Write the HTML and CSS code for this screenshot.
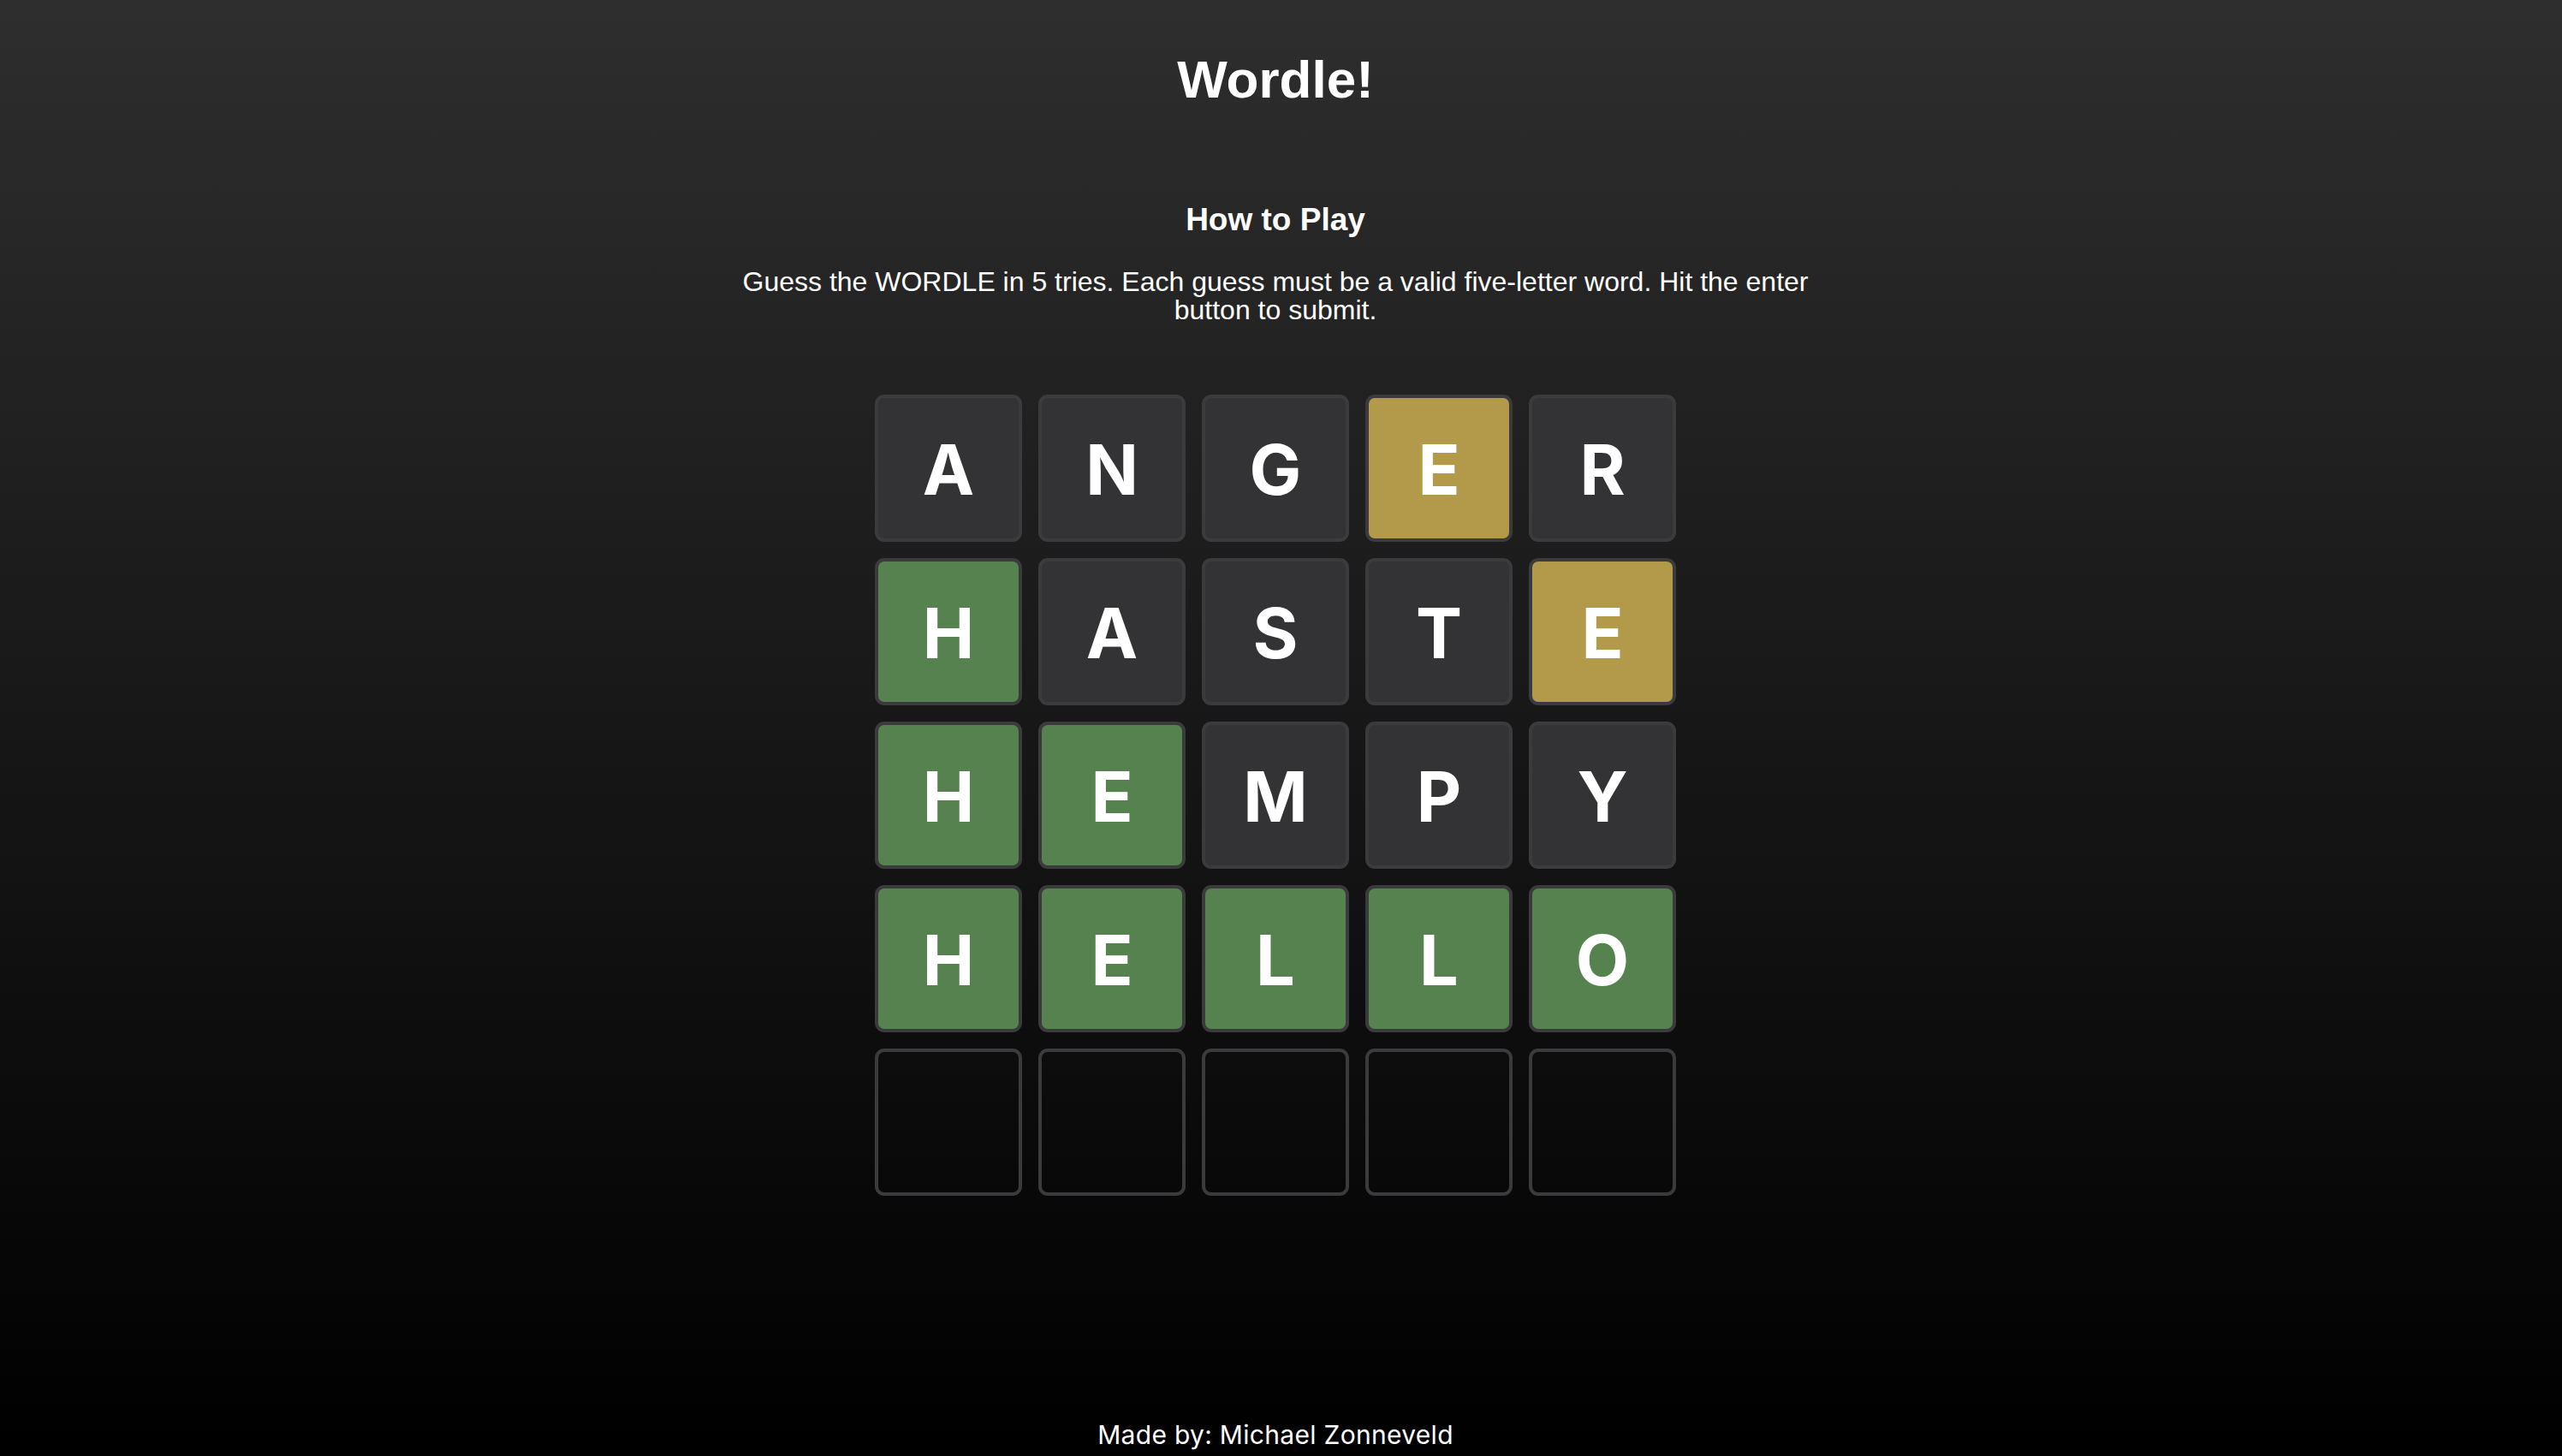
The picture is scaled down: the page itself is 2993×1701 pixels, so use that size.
FILE: index.html
```html
<!DOCTYPE html>
<html lang="en">
<head>
<meta charset="utf-8">
<title>Wordle!</title>
<link rel="stylesheet" href="styles.css">
</head>
<body>
<div class="page">
  <h1 class="title">Wordle!</h1>
  <h2 class="subtitle">How to Play</h2>
  <p class="intro">Guess the WORDLE in 5 tries. Each guess must be a valid five-letter word. Hit the enter button to submit.</p>
  <div class="board">
    <div class="tile absent">A</div>
    <div class="tile absent">N</div>
    <div class="tile absent">G</div>
    <div class="tile present">E</div>
    <div class="tile absent">R</div>

    <div class="tile correct">H</div>
    <div class="tile absent">A</div>
    <div class="tile absent">S</div>
    <div class="tile absent">T</div>
    <div class="tile present">E</div>

    <div class="tile correct">H</div>
    <div class="tile correct">E</div>
    <div class="tile absent">M</div>
    <div class="tile absent">P</div>
    <div class="tile absent">Y</div>

    <div class="tile correct">H</div>
    <div class="tile correct">E</div>
    <div class="tile correct">L</div>
    <div class="tile correct">L</div>
    <div class="tile correct">O</div>

    <div class="tile empty"></div>
    <div class="tile empty"></div>
    <div class="tile empty"></div>
    <div class="tile empty"></div>
    <div class="tile empty"></div>
  </div>
  <footer class="footer">Made by: Michael Zonneveld</footer>
</div>
</body>
</html>
```
FILE: styles.css
```css
html, body {
  margin: 0;
  padding: 0;
}
body {
  background: linear-gradient(to bottom, #2e2e2e 0%, #000 100%);
  min-height: 100vh;
  color: #fff;
  font-family: "Liberation Sans", Arial, sans-serif;
}
.page {
  min-height: 100vh;
  box-sizing: border-box;
  display: flex;
  flex-direction: column;
  align-items: center;
  padding-right: 13px;
  padding-top: 57px;
  padding-bottom: 8px;
}
.title {
  margin: 0;
  font-size: 62px;
  font-weight: 700;
  line-height: 71px;
}
.subtitle {
  margin: 107px 0 0;
  font-size: 37px;
  font-weight: 700;
  line-height: 43px;
}
.intro {
  margin: 35px 0 0;
  max-width: 1300px;
  text-align: center;
  font-size: 32px;
  line-height: 33px;
}
.board {
  margin-top: 82px;
  display: grid;
  grid-template-columns: repeat(5, 172px);
  grid-auto-rows: 172px;
  gap: 19px;
}
.tile {
  box-sizing: border-box;
  border: 4px solid #3b3b3d;
  border-radius: 11px;
  padding-top: 4px;
  display: flex;
  align-items: center;
  justify-content: center;
  font-family: Inter, "Liberation Sans", sans-serif;
  font-weight: 700;
  font-size: 81px;
  color: #fff;
}
.absent {
  background: #333335;
}
.present {
  background: #b39a4b;
}
.correct {
  background: #56824f;
}
.empty {
  background: transparent;
}
.footer {
  margin-top: auto;
  font-family: Inter, "Liberation Sans", sans-serif;
  font-size: 30px;
  letter-spacing: 0.3px;
  line-height: 34px;
}
```
